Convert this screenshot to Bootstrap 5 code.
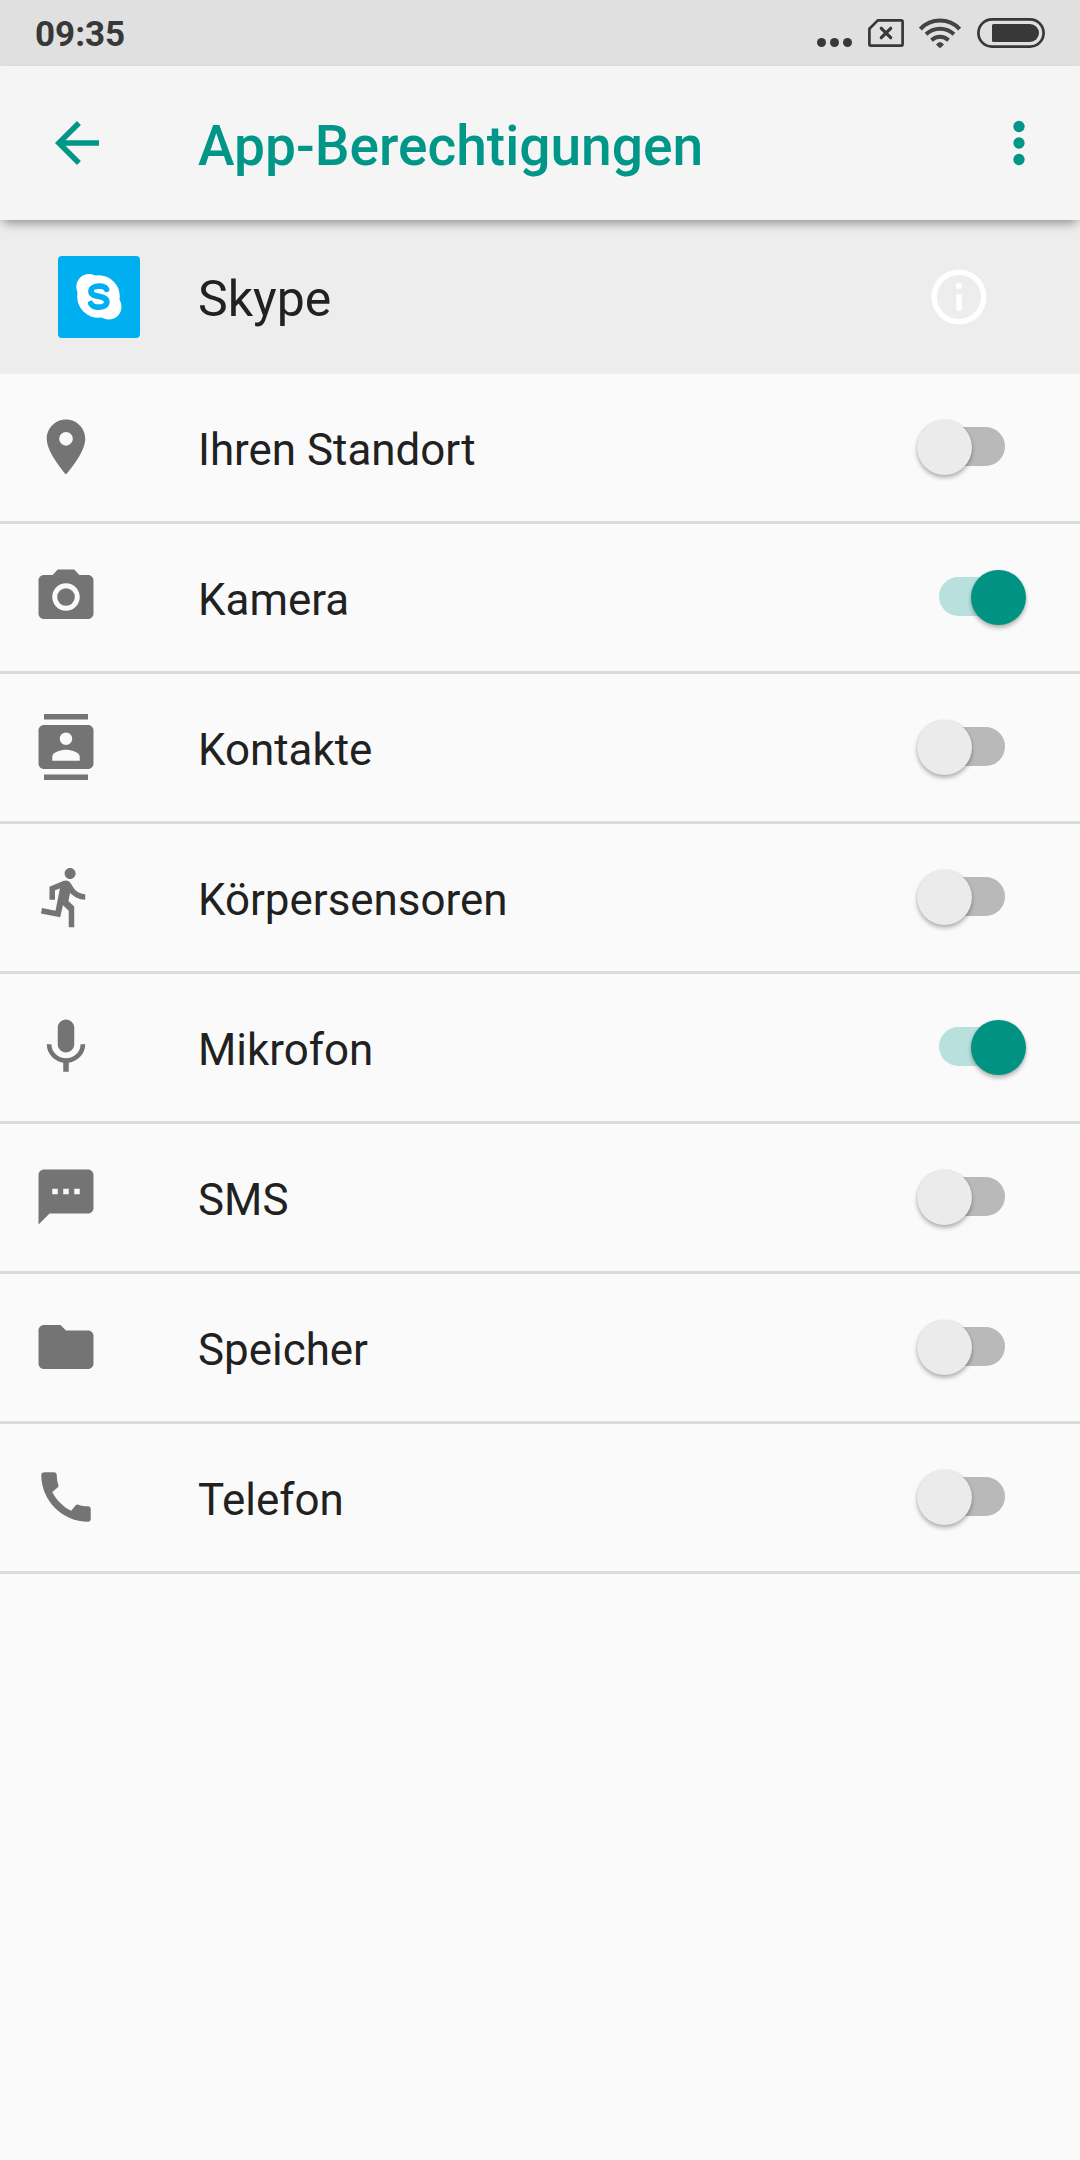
<!DOCTYPE html>
<html lang="de">
<head>
<meta charset="utf-8">
<meta name="viewport" content="width=device-width, initial-scale=1">
<title>App-Berechtigungen</title>
<link href="https://cdn.jsdelivr.net/npm/bootstrap@5.3.0/dist/css/bootstrap.min.css" rel="stylesheet">
<style>
  body { font-family: Roboto, "Noto Sans", sans-serif; background: #fafafa; color: #212121; min-height: 2160px; }
  .status-bar { height: 66px; background: #e0e0e0; color: #383838; padding: 0 35px; }
  .clock { font-size: 35px; font-weight: 700; line-height: 1; padding-top: 3px; }
  .status-icons svg { height: 66px; display: block; }
  .status-icons { gap: 16px; }
  .status-icons .wifi { margin-left: -1px; }
  .app-bar { height: 154px; background: #f5f5f5; color: #009688; padding: 0 28px 0 44px; position: relative; z-index: 1; box-shadow: 0 6px 10px -3px rgba(0,0,0,.4); }
  .app-title { font-size: 55.1px; font-weight: 500; line-height: 56px; padding-top: 5px; margin-left: 88px; }
  .icon { width: 66px; height: 66px; fill: currentColor; flex: none; display: block; }
  .app-head { height: 154px; background: #ededed; padding: 0 88px 0 58px; }
  .app-logo { width: 82px; height: 82px; border-radius: 4px; background: #00aff0; }
  .app-name { font-size: 50px; line-height: 1; padding-top: 4px; margin-left: 58px; }
  .list-group-item.perm { height: 150px; background: #fafafa; color: #212121; border-width: 0 0 3px; border-color: #dadbdb; padding: 0 75px 1px 33px; }
  .list-group-flush > .list-group-item.perm:last-child { border-bottom-width: 3px; }
  .perm .icon { color: #747474; }
  .perm-name { font-size: 43.9px; line-height: 44px; padding-top: 5px; margin-left: 99px; }
  .toggle { width: 66px; height: 39px; margin-bottom: 1px; border-radius: 20px; background: #b9b9b9; }
  .toggle::after { content: ""; position: absolute; top: -7.5px; left: -21.7px; width: 55px; height: 55px; border-radius: 50%; background: #ebebeb; box-shadow: 0 3px 4px rgba(0,0,0,.28), 0 0 2px rgba(0,0,0,.12); }
  .toggle.on { background: #b8e0dc; }
  .toggle.on::after { left: 32.3px; background: #009384; }
</style>
<script src="https://cdn.jsdelivr.net/npm/bootstrap@5.3.0/dist/js/bootstrap.bundle.min.js"></script>
</head>
<body>
<div class="status-bar d-flex align-items-center justify-content-between">
  <div class="clock">09:35</div>
  <div class="status-icons d-flex">
    <svg width="35" viewBox="817 0 35 66" fill="#383838"><circle cx="821.5" cy="42.5" r="4.5"/><circle cx="834.5" cy="42.5" r="4.5"/><circle cx="847.5" cy="42.5" r="4.5"/></svg>
    <svg width="36" viewBox="868 0 36 66" fill="none" stroke="#383838" stroke-width="2.7"><path d="M877.8 20.4H901.2Q902.6 20.4 902.6 21.8V44.2Q902.6 45.6 901.2 45.6H870.8Q869.4 45.6 869.4 44.2V28.8Z" stroke-linejoin="round"/><path d="M881.3 28.3L890.7 37.7M890.7 28.3L881.3 37.7" stroke-width="3.2" stroke-linecap="round"/></svg>
    <svg class="wifi" width="42" viewBox="919 0 42 66" fill="none" stroke="#444" stroke-width="4"><path d="M920.4 29A27 27 0 0 1 959.6 29"/><path d="M926 34.3A20.5 20.5 0 0 1 954 34.3"/><path d="M931.5 40.2A12.5 12.5 0 0 1 948.5 40.2"/><path d="M936 44.6Q940 39.6 944 44.6L941.3 47.3Q940 48.6 938.7 47.3Z" fill="#444" stroke="none"/></svg>
    <svg width="68" viewBox="977 0 68 66"><rect x="978.4" y="19.4" width="65.2" height="27.2" rx="13.6" fill="none" stroke="#383838" stroke-width="2.7"/><path d="M993.5 24H1030A9 9 0 0 1 1030 42H993.5Q992 42 992 40.5V25.5Q992 24 993.5 24Z" fill="#383838"/></svg>
  </div>
</div>
<header class="app-bar d-flex align-items-center">
  <svg class="icon" viewBox="0 0 24 24"><path d="M20 11H7.83l5.59-5.59L12 4l-8 8 8 8 1.41-1.41L7.83 13H20v-2z"/></svg>
  <h1 class="app-title mb-0">App-Berechtigungen</h1>
  <svg class="icon ms-auto" viewBox="0 0 24 24"><circle cx="12" cy="6" r="2.05"/><circle cx="12" cy="12" r="2.05"/><circle cx="12" cy="18" r="2.05"/></svg>
</header>
<section class="app-head d-flex align-items-center">
  <svg class="app-logo" viewBox="0 0 82 82"><g fill="#fff"><circle cx="40.5" cy="40.5" r="21.3"/><circle cx="31" cy="30.8" r="12.7"/><circle cx="50.8" cy="50.7" r="12.7"/></g><path d="M48.5 33.3C47.5 31 45 30.2 41 30.2C36 30.2 33 32.2 33 35.2C33 42.6 48.8 38.2 48.8 45.8C48.8 49.4 45.5 51.2 40.7 51.2C36.5 51.2 34 49.8 32.8 47.5" fill="none" stroke="#00aff0" stroke-width="5.7" stroke-linecap="round"/></svg>
  <div class="app-name">Skype</div>
  <svg class="icon ms-auto text-white" viewBox="0 0 24 24"><path d="M11 17h2v-6h-2v6zm1-15C6.48 2 2 6.48 2 12s4.48 10 10 10 10-4.48 10-10S17.52 2 12 2zm0 18c-4.41 0-8-3.59-8-8s3.59-8 8-8 8 3.59 8 8-3.59 8-8 8zM11 9h2V7h-2v2z"/></svg>
</section>
<ul class="list-group list-group-flush">
  <li class="list-group-item perm d-flex align-items-center">
    <svg class="icon" viewBox="0 0 24 24"><path d="M12 2C8.13 2 5 5.13 5 9c0 5.25 7 13 7 13s7-7.75 7-13c0-3.87-3.13-7-7-7zm0 9.5a2.5 2.5 0 0 1 0-5 2.5 2.5 0 0 1 0 5z"/></svg>
    <span class="perm-name">Ihren Standort</span><span class="toggle ms-auto position-relative" role="switch" aria-checked="false"></span>
  </li>
  <li class="list-group-item perm d-flex align-items-center">
    <svg class="icon" viewBox="0 0 24 24"><circle cx="12" cy="12" r="3.2"/><path d="M9 2L7.17 4H4c-1.1 0-2 .9-2 2v12c0 1.1.9 2 2 2h16c1.1 0 2-.9 2-2V6c0-1.1-.9-2-2-2h-3.17L15 2H9zm3 15c-2.76 0-5-2.24-5-5s2.24-5 5-5 5 2.24 5 5-2.24 5-5 5z"/></svg>
    <span class="perm-name">Kamera</span><span class="toggle on ms-auto position-relative" role="switch" aria-checked="true"></span>
  </li>
  <li class="list-group-item perm d-flex align-items-center">
    <svg class="icon" viewBox="0 0 24 24"><path d="M20 0H4v2h16V0zM4 24h16v-2H4v2zM20 4H4c-1.1 0-2 .9-2 2v12c0 1.1.9 2 2 2h16c1.1 0 2-.9 2-2V6c0-1.1-.9-2-2-2zm-8 2.75c1.24 0 2.25 1.01 2.25 2.25s-1.01 2.25-2.25 2.25S9.75 10.24 9.75 9 10.76 6.75 12 6.75zM17 17H7v-1.5c0-1.67 3.33-2.5 5-2.5s5 .83 5 2.5V17z"/></svg>
    <span class="perm-name">Kontakte</span><span class="toggle ms-auto position-relative" role="switch" aria-checked="false"></span>
  </li>
  <li class="list-group-item perm d-flex align-items-center">
    <svg class="icon" viewBox="0 0 24 24"><path d="M13.49 5.48c1.1 0 2-.9 2-2s-.9-2-2-2-2 .9-2 2 .9 2 2 2zm-3.6 13.9l1-4.4 2.1 2v6h2v-7.5l-2.1-2 .6-3c1.3 1.5 3.3 2.5 5.5 2.5v-2c-1.9 0-3.5-1-4.3-2.4l-1-1.6c-.4-.6-1-1-1.7-1-.3 0-.5.1-.8.1l-5.2 2.2v4.7h2v-3.4l1.8-.7-1.6 8.1-4.9-1-.4 2 7 1.4z"/></svg>
    <span class="perm-name">Körpersensoren</span><span class="toggle ms-auto position-relative" role="switch" aria-checked="false"></span>
  </li>
  <li class="list-group-item perm d-flex align-items-center">
    <svg class="icon" viewBox="0 0 24 24"><path d="M12 14c1.66 0 2.99-1.34 2.99-3L15 5c0-1.66-1.34-3-3-3S9 3.34 9 5v6c0 1.66 1.34 3 3 3zm5.3-3c0 3-2.54 5.1-5.3 5.1S6.7 14 6.7 11H5c0 3.41 2.72 6.23 6 6.72V21h2v-3.28c3.28-.48 6-3.3 6-6.72h-1.7z"/></svg>
    <span class="perm-name">Mikrofon</span><span class="toggle on ms-auto position-relative" role="switch" aria-checked="true"></span>
  </li>
  <li class="list-group-item perm d-flex align-items-center">
    <svg class="icon" viewBox="0 0 24 24"><path d="M20 2H4c-1.1 0-2 .9-2 2v18l4-4h14c1.1 0 2-.9 2-2V4c0-1.1-.9-2-2-2zM9 11H7V9h2v2zm4 0h-2V9h2v2zm4 0h-2V9h2v2z"/></svg>
    <span class="perm-name">SMS</span><span class="toggle ms-auto position-relative" role="switch" aria-checked="false"></span>
  </li>
  <li class="list-group-item perm d-flex align-items-center">
    <svg class="icon" viewBox="0 0 24 24"><path d="M10 4H4c-1.1 0-2 .9-2 2v12c0 1.1.9 2 2 2h16c1.1 0 2-.9 2-2V8c0-1.1-.9-2-2-2h-8l-2-2z"/></svg>
    <span class="perm-name">Speicher</span><span class="toggle ms-auto position-relative" role="switch" aria-checked="false"></span>
  </li>
  <li class="list-group-item perm d-flex align-items-center">
    <svg class="icon" viewBox="0 0 24 24"><path d="M20.01 15.38c-1.23 0-2.42-.2-3.53-.56-.35-.12-.74-.03-1.01.24l-1.57 1.97c-2.83-1.35-5.48-3.9-6.89-6.83l1.95-1.66c.27-.28.35-.67.24-1.02-.37-1.11-.56-2.3-.56-3.53 0-.54-.45-.99-.99-.99H4.19C3.65 3 3 3.24 3 3.99 3 13.28 10.73 21 20.01 21c.71 0 .99-.63.99-1.18v-3.45c0-.54-.45-.99-.99-.99z"/></svg>
    <span class="perm-name">Telefon</span><span class="toggle ms-auto position-relative" role="switch" aria-checked="false"></span>
  </li>
</ul>
</body>
</html>
